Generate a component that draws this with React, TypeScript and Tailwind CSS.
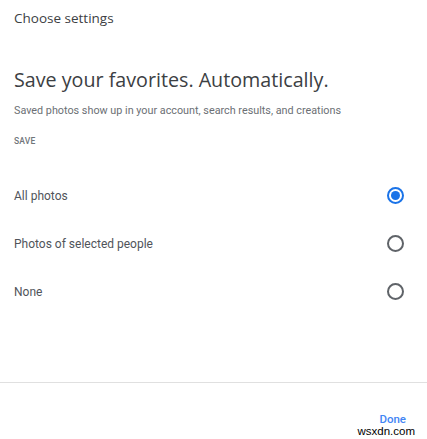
import React from "react";

const options = [
  { label: "All photos", checked: true },
  { label: "Photos of selected people", checked: false },
  { label: "None", checked: false },
];

function Radio({ checked }: { checked: boolean }) {
  if (checked) {
    return (
      <span className="w-[17px] h-[17px] rounded-full border-2 border-[#1a73e8] flex items-center justify-center">
        <span className="w-[9px] h-[9px] rounded-full bg-[#1a73e8]" />
      </span>
    );
  }
  return <span className="w-[17px] h-[17px] rounded-full border-2 border-[#5f6368]" />;
}

export default function App() {
  return (
    <div className="w-[427px] h-[439px] bg-white flex flex-col font-['Roboto',sans-serif] text-[#3c4043]">
      <div className="pt-[9px] px-[14px] text-[13.5px] leading-[18px] font-medium text-[#3c4043] font-['Open_Sans',sans-serif]">
        Choose settings
      </div>
      <div className="px-[14px] pt-[40px]">
        <h1 className="text-[19.7px] leading-[26px] text-[#3c4043] font-['Open_Sans',sans-serif]">
          Save your favorites. Automatically.
        </h1>
        <p className="mt-[11px] text-[10.8px] leading-[13px] text-[#6b6f74]">
          Saved photos show up in your account, search results, and creations
        </p>
        <div className="mt-[19px] text-[8.5px] leading-[10px] font-medium tracking-wide text-[#70757a]">SAVE</div>
      </div>
      <div className="flex flex-col pt-[41px] pl-[14px] pr-[23px] gap-[31px]">
        {options.map((o) => (
          <div key={o.label} className="flex items-center justify-between h-[17px]">
            <span className="text-[12px] text-[#50545a]">{o.label}</span>
            <Radio checked={o.checked} />
          </div>
        ))}
      </div>
      <div className="mt-auto border-t border-[#e0e0e0] h-[57px] flex justify-end items-start pr-[21px] pt-[30px] relative">
        <span className="text-[11.5px] font-medium text-[#4285f4] leading-[12px]">Done</span>
        <span className="absolute right-[12px] top-[42px] text-[11.5px] leading-[12px] text-black font-['Liberation_Sans',sans-serif]">
          wsxdn.com
        </span>
      </div>
    </div>
  );
}
